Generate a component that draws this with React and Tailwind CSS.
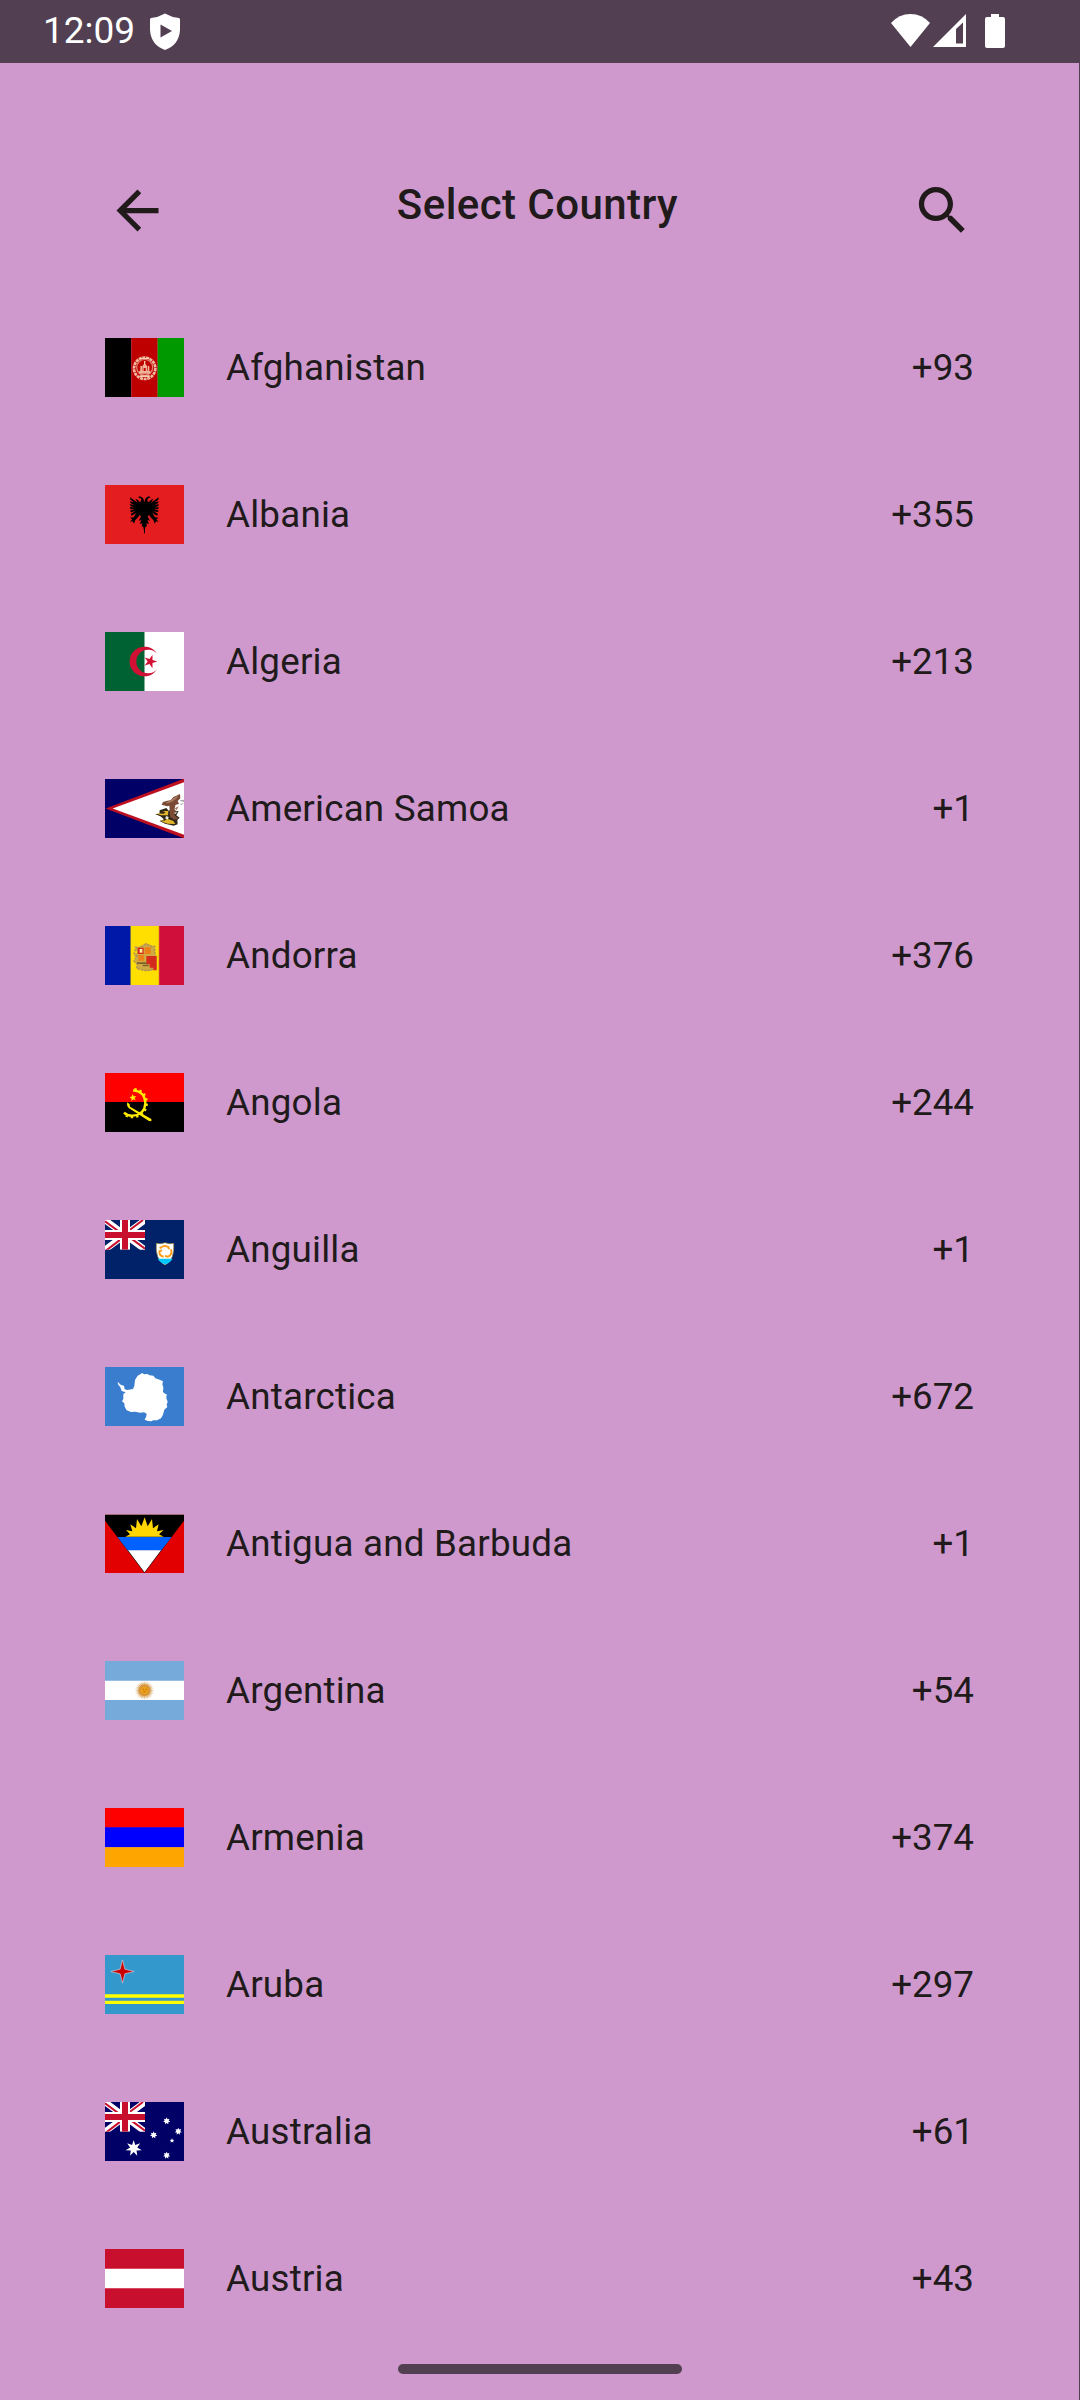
const star = (cx, cy, outer, inner, points, rotation = -90) =>
  Array.from({ length: points * 2 }, (_, i) => {
    const r = i % 2 ? inner : outer;
    const a = ((rotation + (i * 180) / points) * Math.PI) / 180;
    return `${(cx + r * Math.cos(a)).toFixed(2)},${(cy + r * Math.sin(a)).toFixed(2)}`;
  }).join(' ');

function Flag({ children }) {
  return (
    <svg viewBox="0 0 237 177" preserveAspectRatio="none" className="h-[59px] w-[79px] shrink-0 overflow-hidden" aria-hidden="true">
      {children}
    </svg>
  );
}

function Union() {
  return (
    <svg x="0" y="0" width="120" height="89" viewBox="0 0 120 89">
      <path d="M0 0L120 89M120 0L0 89" stroke="#fff" strokeWidth="19" />
      <path d="M0 4L54 44M120 86L66 46M114 0L62 39M4 91L58 50" stroke="#c8102e" strokeWidth="6" />
      <path d="M60 0V89M0 45H120" stroke="#fff" strokeWidth="30" />
      <path d="M60 0V89M0 45H120" stroke="#c8102e" strokeWidth="18" />
    </svg>
  );
}

function Afghanistan() {
  return (
    <Flag>
      <path fill="#000" d="M0 0h79v177H0z" />
      <path fill="#bf0000" d="M79 0h79v177H79z" />
      <path fill="#009900" d="M158 0h79v177h-79z" />
      <circle cx="119" cy="91" r="32" fill="none" stroke="#f0b9a0" strokeWidth="8" strokeDasharray="9 2" />
      <circle cx="119" cy="88" r="24" fill="none" stroke="#df8070" strokeWidth="4" />
      <path d="M102 100h34v7h-34zM106 84h5v14h-5zM128 84h5v14h-5zM112 84q7-12 14 0v14h8v4h-30v-4h8z" fill="#efb397" />
      <path d="M117 69h4v11h-4zM104 112h30v5h-30zM105 60h28v3h-28z" fill="#f4d0b0" />
      <path d="M116 90h6v9h-6z" fill="#bf0000" />
    </Flag>
  );
}

function Albania() {
  const half = 'M118 56L116 43Q112 36 104 34L99 37L106 40Q111 44 107 50Q101 52 99 45L91 41L98 53L75 37L76 44L87 52L75 49L77 55L88 59L74 58L77 64L88 67L74 67L77 73L89 73L75 77L78 82L91 78L77 87L80 92L94 84L86 97L75 98L82 103L75 111L83 109L87 116L91 105L100 96L104 89L108 95L101 107L109 105L104 117L112 115L110 123L115 126L118 144Z';
  return (
    <Flag>
      <path fill="#e41e20" d="M0 0h237v177H0z" />
      <path d={half} />
      <path d={half} transform="matrix(-1 0 0 1 236 0)" />
      <path d="M117 50h3v95h-3z" />
    </Flag>
  );
}

function Algeria() {
  return (
    <Flag>
      <path fill="#fff" d="M0 0h237v177H0z" />
      <path fill="#006233" d="M0 0h118.500v177H0z" />
      <path fill="#d21034" d="M156 65A44.500 44.500 0 1 0 156 112A35.500 35.500 0 1 1 156 65Z" />
      <polygon fill="#d21034" points={star(136, 88.500, 21, 8, 5, 0)} />
    </Flag>
  );
}

function AmericanSamoa() {
  return (
    <Flag>
      <path fill="#006" d="M0 0h237v177H0z" />
      <path fill="#bd1021" d="M2 88.500L237 -1V178Z" />
      <path fill="#fff" d="M23 88.500L237 10V167Z" />
      <path fill="#7b4a35" d="M225 45L226 58L218 66L222 75L210 78L207 86L199 79L187 82L170 77L174 69L187 65L197 64L205 54Z" />
      <path fill="#a87961" d="M202 60L220 47L216 57L204 67L190 73L181 72ZM209 88L221 82L215 94Z" />
      <path fill="#aaa" d="M223 64L237 62V69L228 67ZM224 75L237 72L229 78Z" />
      <path fill="#302719" d="M164 94L184 87L191 95L206 89L213 97L221 96L214 109L224 116L217 123L218 136L206 140L180 134L164 126L177 121L166 112L150 105L163 105Z" />
      <path fill="#e2b52c" d="M153 103L177 104L181 99L172 96L190 96L189 109L168 109ZM165 122L178 125L187 119L205 126L211 135L188 134L175 130Z" />
      <path fill="#7b4a35" d="M193 78L212 76L208 92L214 97L208 108L221 119L207 122L195 113Z" />
      <path fill="#f0eee6" d="M183 111L191 114L189 121L181 119ZM207 101L217 100L211 105Z" />
    </Flag>
  );
}

function Andorra() {
  return (
    <Flag>
      <path fill="#0018a8" d="M0 0h77v177H0z" />
      <path fill="#ffdf00" d="M77 0h85v177H77z" />
      <path fill="#d0103a" d="M162 0h75v177h-75z" />
      <path stroke="#77703e" strokeWidth="2" d="M76.500 0V177" />
      <path stroke="#d8802c" strokeWidth="2" d="M162 0V177" />
      <path fill="#d1aa43" d="M88 60L99 64L110 58L123 51L136 56L149 61L151 82L155 91V129L134 136L114 134L94 127L96 113L87 107L95 98L86 88L97 80Z" />
      <path fill="none" stroke="#ae9554" strokeWidth="5" strokeDasharray="6 4" d="M91 65H108L123 54L138 62H149V83M91 70L88 82L96 91L87 104L96 115V128L124 134L145 129" />
      <path fill="#d52b1e" d="M98 65h18v19h-18zM124 90h31v43h-10v-8h-11v-10h-10z" />
      <path fill="#fff1a0" d="M104 69h8v11h-8z" />
      <path fill="#ed8018" d="M119 64h18v20h-18zM100 87h17v17h-17z" />
      <path fill="#7c632d" d="M96 109h29v5H96zM113 116h18v5h-18z" />
    </Flag>
  );
}

function Angola() {
  return (
    <Flag>
      <path d="M0 0h237v177H0z" />
      <path fill="red" d="M0 0h237v87H0z" />
      <path fill="none" stroke="#ffec00" strokeWidth="7" d="M84 52Q120 55 121 90Q119 125 84 128Q67 129 57 119" />
      <path fill="none" stroke="#ffec00" strokeWidth="6" strokeDasharray="7 9" d="M88 48Q124 53 126 90Q123 129 84 133Q68 133 58 125" />
      <path fill="#ffec00" d="M67 88L74 94L75 101L139 138V145L132 144L71 105Q64 99 67 88Z" />
      <polygon fill="#ffec00" points={star(84, 74, 11, 5, 5, -100)} />
    </Flag>
  );
}

function Anguilla() {
  return (
    <Flag>
      <path fill="#012169" d="M0 0h237v177H0z" />
      <Union />
      <path d="M154 70Q168 73 180 68Q193 73 206 70Q210 119 180 135Q150 119 154 70Z" fill="#fff" stroke="#887a35" strokeWidth="2" />
      <path fill="#00c8ff" d="M158 116H203Q196 128 180 133Q164 127 158 116Z" />
      <path fill="none" stroke="#ff9d1b" strokeWidth="6" d="M164 85Q176 73 190 81L192 88M198 88Q203 105 189 110L180 108M176 110Q160 106 164 93L171 91" />
    </Flag>
  );
}

function Antarctica() {
  return (
    <Flag>
      <path fill="#3a7dce" d="M0 0h237v177H0z" />
      <path fill="#fff" d="M38 44L48 54L57 56L59 67L67 69L84 66L88 57L90 39L98 26L106 22L111 18L118 22L127 21L134 25L145 26L151 34L164 38L174 43L172 52L175 61L174 75L180 80L185 82L184 94L188 104L185 113L187 120L178 128L174 143L168 154L156 160L144 160L140 163L129 162L119 158L124 148L125 140L117 136L105 137L91 134L78 135L65 130L59 119L58 109L51 103L55 96L55 81L62 76L50 72L46 61L39 52Z" />
    </Flag>
  );
}

function Antigua() {
  return (
    <Flag>
      <path fill="#e20000" d="M0 0h237v177H0z" />
      <path d="M0 2H237V20L118.500 177L0 20Z" />
      <path fill="#9a929a" d="M0 0H237V2H0Z" />
      <path fill="#0061ff" d="M37 69H200L168 110H69Z" />
      <path fill="#fff" d="M69 109H168L118.500 175Z" />
      <path fill="#ffd600" d="M61 68L75 61L63 48L82 52L76 31L93 43L96 15L109 37L119 10L128 37L141 15L144 43L161 31L156 52L176 48L162 61L176 68Z" />
    </Flag>
  );
}

function Argentina() {
  return (
    <Flag>
      <path fill="#75aadb" d="M0 0h237v177H0z" />
      <path fill="#fff" d="M0 59h237v58H0z" />
      <polygon fill="#e4c18f" points={star(118.500, 88, 29, 20, 32)} />
      <circle cx="118.500" cy="88" r="18" fill="#d7963a" />
      <circle cx="118.500" cy="88" r="11" fill="#eda018" />
      <path d="M112 85h5M121 85h5M115 92h7" stroke="#a95e15" strokeWidth="2" />
    </Flag>
  );
}

function Armenia() {
  return (
    <Flag>
      <path fill="red" d="M0 0h237v59H0z" />
      <path fill="#00f" d="M0 58h237v60H0z" />
      <path fill="orange" d="M0 118h237v59H0z" />
    </Flag>
  );
}

function Aruba() {
  return (
    <Flag>
      <path fill="#3399cc" d="M0 0h237v177H0z" />
      <path fill="#ff0" d="M0 118h237v10H0zM0 137h237v10H0z" />
      <polygon fill="#c00" stroke="#d5cbd8" strokeWidth="2" points={star(52.500, 49.500, 35, 10, 4)} />
    </Flag>
  );
}

function Australia() {
  return (
    <Flag>
      <path fill="#006" d="M0 0h237v177H0z" />
      <Union />
      <g fill="#fff">
        <polygon points={star(86, 139, 25, 11, 7)} />
        <polygon points={star(185, 57, 11, 6, 7)} />
        <polygon points={star(146, 99, 11, 6, 7)} />
        <polygon points={star(220, 88, 11, 6, 7)} />
        <polygon points={star(185, 160, 11, 6, 7)} />
        <polygon points={star(201, 116, 7, 3.500, 5)} />
      </g>
    </Flag>
  );
}

function Austria() {
  return (
    <Flag>
      <path fill="#c8102e" d="M0 0h237v177H0z" />
      <path fill="#fff" d="M0 59h237v59H0z" />
    </Flag>
  );
}

const countries = [
  ['Afghanistan', '+93', Afghanistan],
  ['Albania', '+355', Albania],
  ['Algeria', '+213', Algeria],
  ['American Samoa', '+1', AmericanSamoa],
  ['Andorra', '+376', Andorra],
  ['Angola', '+244', Angola],
  ['Anguilla', '+1', Anguilla],
  ['Antarctica', '+672', Antarctica],
  ['Antigua and Barbuda', '+1', Antigua],
  ['Argentina', '+54', Argentina],
  ['Armenia', '+374', Armenia],
  ['Aruba', '+297', Aruba],
  ['Australia', '+61', Australia],
  ['Austria', '+43', Austria],
];

function StatusBar() {
  return (
    <div className="flex h-[63px] w-full shrink-0 items-start bg-[#523f52] pl-[43px] pr-[75px] text-white">
      <span className="mt-[9px] w-[107px] text-[37px] leading-[44px]">12:09</span>
      <svg viewBox="0 0 30 37" className="mt-[13px] h-[37px] w-[30px]" fill="currentColor">
        <path fillRule="evenodd" d="M15 .5Q22 4.500 29 5Q30 5 30 7V17Q29 32 15 37Q1 32 0 17V7Q0 5 1 5Q8 4.500 15 .5ZM10.500 11.500V24.500L22 18Z" />
      </svg>
      <svg viewBox="0 0 39 33" className="ml-auto mt-3.5 h-[33px] w-[39px]" fill="currentColor">
        <path d="M0 9Q8 0 19.500 0Q31 0 39 9L19.500 33Z" />
      </svg>
      <svg viewBox="0 0 33 33" className="ml-[3px] mt-3.5 h-[33px] w-[33px]" fill="currentColor">
        <path fillRule="evenodd" d="M33 0V33H0ZM30 8.500L23 15V29.500H30Z" />
      </svg>
      <svg viewBox="0 0 20 34" className="ml-[19px] mt-3.5 h-[34px] w-5" fill="currentColor">
        <path d="M6 0H14V3H18Q20 3 20 5V32Q20 34 18 34H2Q0 34 0 32V5Q0 3 2 3H6Z" />
      </svg>
    </div>
  );
}

export default function App() {
  return (
    <main className="flex h-[2400px] w-[1080px] flex-col overflow-hidden bg-[#523f52] font-['Roboto',sans-serif] text-[#201a1b]">
      <StatusBar />
      <section className="flex min-h-0 w-[1079px] flex-1 flex-col bg-[#cf99cd]">
        <header className="flex h-[231px] shrink-0 items-start justify-between pl-[106px] pr-[105px] pt-[116px]">
          <button aria-label="Back" className="h-[63px] w-[63px]">
            <svg viewBox="0 0 24 24" className="h-[63px] w-[63px]" fill="currentColor">
              <path d="M20 11H7.830l5.590-5.590L12 4l-8 8 8 8 1.410-1.410L7.830 13H20v-2z" />
            </svg>
          </button>
          <h1 className="mr-[5px] mt-px whitespace-nowrap text-[42px] font-medium leading-[50px] tracking-[0.43px]">Select Country</h1>
          <button aria-label="Search" className="h-[63px] w-[63px]">
            <svg viewBox="0 0 24 24" className="h-[63px] w-[63px]" fill="currentColor">
              <path d="M15.500 14h-.79l-.28-.27C15.410 12.590 16 11.110 16 9.500 16 5.910 13.090 3 9.500 3S3 5.910 3 9.500 5.910 16 9.500 16c1.610 0 3.090-.59 4.230-1.570l.27.28v.79l5 4.990L20.490 19l-4.990-5zm-6 0C7.010 14 5 11.990 5 9.500S7.010 5 9.500 5 14 7.010 14 9.500 11.990 14 9.500 14z" />
            </svg>
          </button>
        </header>
        <ul className="flex flex-col">
          {countries.map(([name, code, Art]) => (
            <li key={name} className="flex h-[147px] items-center pl-[105px] pr-[105px]">
              <Art />
              <span className="ml-[42px] text-[36.75px] leading-[52px] tracking-[0.22px]">{name}</span>
              <span className="ml-auto text-[36.75px] leading-[52px]">{code}</span>
            </li>
          ))}
        </ul>
        <div className="ml-px mt-3 h-2.5 w-[284px] shrink-0 self-center rounded-full bg-[#523f52]" />
      </section>
    </main>
  );
}
